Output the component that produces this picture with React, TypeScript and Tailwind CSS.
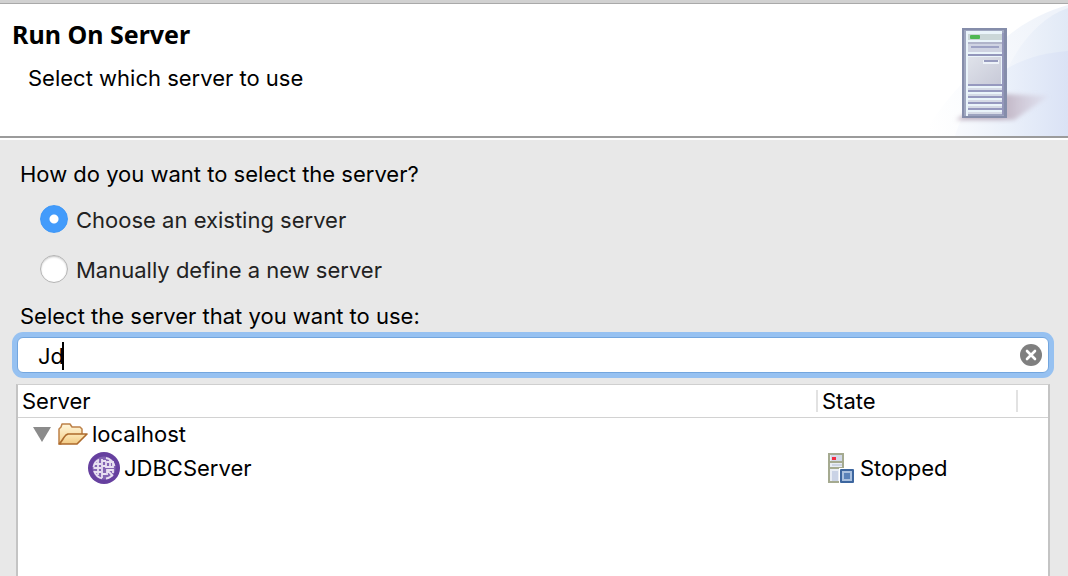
import { useState } from "react";

function BannerArt() {
  return (
    <svg className="h-[132px] w-[148px] shrink-0" viewBox="920 4 148 132" aria-hidden="true">
      <defs>
        <linearGradient id="sweep" gradientUnits="userSpaceOnUse" x1="925" x2="1068" y1="120" y2="80">
          <stop offset="0" stopColor="#ffffff" />
          <stop offset="0.5" stopColor="#f8fafd" />
          <stop offset="1" stopColor="#eff3fa" />
        </linearGradient>
        <linearGradient id="sweepInner" gradientUnits="userSpaceOnUse" x1="1000" x2="1068" y1="0" y2="0">
          <stop offset="0" stopColor="#f4f7fc" />
          <stop offset="1" stopColor="#e1e9f6" />
        </linearGradient>
        <linearGradient id="sweepLow" gradientUnits="userSpaceOnUse" x1="950" x2="1068" y1="0" y2="0">
          <stop offset="0" stopColor="#fafbfe" />
          <stop offset="0.5" stopColor="#eaf0fa" />
          <stop offset="1" stopColor="#dae2f5" />
        </linearGradient>
        <linearGradient id="shade" gradientUnits="userSpaceOnUse" x1="1000" x2="1050" y1="0" y2="0">
          <stop offset="0" stopColor="#b09fb1" stopOpacity="0.8" />
          <stop offset="1" stopColor="#cdbccb" stopOpacity="0.15" />
        </linearGradient>
        <linearGradient id="face" x1="0" x2="1" y1="0" y2="1">
          <stop offset="0" stopColor="#dfe2ea" />
          <stop offset="1" stopColor="#c8cad8" />
        </linearGradient>
        <filter id="soft" x="-20%" y="-30%" width="140%" height="160%">
          <feGaussianBlur stdDeviation="2" />
        </filter>
      </defs>
      <path d="M1068 5C1035 14 1009 32 990 53C961 85 939 106 923 136H1068Z" fill="url(#sweep)" />
      <path d="M1068 8C1042 17 1022 40 1009 66L1000 136H1068Z" fill="url(#sweepInner)" />
      <path d="M1068 51C1044 53 1025 58 1008 68C982 84 964 106 955 136H1068Z" fill="url(#sweepLow)" />
      <path d="M1004 94L1049 96L1014 120H956L962 116Z" fill="url(#shade)" filter="url(#soft)" />
      <rect x="962" y="28" width="45" height="90" fill="#858daa" />
      <rect x="964" y="30" width="40" height="86" fill="#a0a7c0" />
      <rect x="966" y="31" width="36" height="85" fill="#eaf4fa" />
      <rect x="1002" y="33" width="2" height="82" fill="#9396ba" />
      <rect x="968" y="34" width="34" height="6" fill="#cbd7d8" />
      <rect x="970" y="35" width="10" height="4" rx="1" fill="#50b854" />
      <rect x="968" y="44" width="34" height="8" fill="#cfd3e2" />
      <rect x="968" y="42" width="34" height="2" fill="#b0b4ca" />
      <rect x="971" y="46" width="28" height="2" fill="#9da2c4" />
      <rect x="968" y="54" width="34" height="2" fill="#9296bb" />
      <rect x="968" y="57" width="33" height="27" fill="url(#face)" />
      <rect x="983" y="60" width="16" height="4" fill="#edf2f8" />
      <rect x="984" y="60" width="14" height="2" fill="#979bbe" />
      <g fill="#9699bf">
        <rect x="968" y="84" width="34" height="2" />
        <rect x="968" y="90" width="34" height="2" />
        <rect x="968" y="96" width="34" height="2" />
        <rect x="968" y="102" width="34" height="2" />
        <rect x="968" y="108" width="34" height="2" />
      </g>
      <g fill="#d5dae6">
        <rect x="968" y="88" width="34" height="2" />
        <rect x="968" y="94" width="34" height="2" />
        <rect x="968" y="100" width="34" height="2" />
        <rect x="968" y="106" width="34" height="2" />
        <rect x="968" y="112" width="34" height="2" />
      </g>
      <rect x="968" y="114" width="34" height="2" fill="#9da3bf" />
    </svg>
  );
}

function FolderIcon() {
  return (
    <svg className="h-[22px] w-[31px] shrink-0" viewBox="0 0 31 22" aria-hidden="true">
      <defs>
        <linearGradient id="folderBack" x1="0" x2="0" y1="0" y2="1">
          <stop offset="0" stopColor="#fff6da" />
          <stop offset="1" stopColor="#f3ce88" />
        </linearGradient>
        <linearGradient id="folderFront" x1="0" x2="0" y1="0" y2="1">
          <stop offset="0" stopColor="#fde9b8" />
          <stop offset="1" stopColor="#f1c983" />
        </linearGradient>
      </defs>
      <path d="M2 20V6L4 4L5 1H13L15 4H23L25 6V12L9 19L3 21Z" fill="url(#folderBack)" stroke="#bd8148" strokeWidth="1.5" strokeLinejoin="round" />
      <path d="M2 21C4 20 6 15 9 12L11 11H30L21 20L20 21Z" fill="url(#folderFront)" stroke="#ad6b2d" strokeWidth="1.7" strokeLinejoin="round" />
    </svg>
  );
}

function JdbcIcon() {
  return (
    <svg className="size-8 shrink-0" viewBox="0 0 32 32" aria-hidden="true">
      <circle cx="16" cy="16" r="16" fill="#66409f" />
      <circle cx="16" cy="16" r="11.500" fill="#8465b3" />
      <g fill="none" stroke="#e8e0f1" strokeWidth="1.800">
        <path d="M11 7.500C8 9 6 12 5.500 15M26.500 14C25.500 10 22 6.500 18 6M6 19C7.500 23 10 25.500 14 26.500M18 26.500C21 26 23 25 24 23" />
        <path d="M7 12H13M5.500 16H13M7 20H13M10 8V23M14 7V26M14 9H18M14 14H18M14 22H18" />
        <path d="M18 9V15H25V10H19M22 8V15M19 18L25 24M19 23V18H25V21" />
      </g>
    </svg>
  );
}

function StoppedIcon() {
  return (
    <svg className="h-[31px] w-[28px] shrink-0" viewBox="0 0 28 31" aria-hidden="true">
      <rect x="0" y="0" width="16" height="30" fill="#a5aa90" />
      <rect x="2" y="2" width="12" height="26" fill="#e9edf4" />
      <rect x="3" y="2" width="11" height="6" fill="#d2d9e8" />
      <rect x="4" y="4" width="4" height="3" fill="#f22c42" />
      <rect x="2" y="8" width="12" height="2" fill="#a5aa90" />
      <rect x="4" y="11" width="10" height="2" fill="#ced5e4" />
      <rect x="2" y="14" width="12" height="2" fill="#a5aa90" />
      <rect x="4" y="18" width="6" height="10" fill="#cad3e6" />
      <rect x="11" y="15" width="16" height="16" fill="#fff" />
      <rect x="12" y="16" width="14" height="14" rx="1" fill="#3d669f" />
      <rect x="14" y="18" width="10" height="10" fill="#a9c0df" />
      <rect x="16" y="20" width="6" height="6" fill="#5a82b9" />
    </svg>
  );
}

const radioClass =
  "size-7 shrink-0 appearance-none rounded-full border border-[#b4b4b4] bg-white shadow-[inset_0_1px_2px_#c8c8c8] checked:border-[#3f97f6] checked:bg-[radial-gradient(circle,#ffffff_4px,#429bfb_5px)] checked:shadow-none";

export default function App() {
  const [mode, setMode] = useState("existing");
  const [filter, setFilter] = useState("Jd");

  return (
    <div className="flex h-screen flex-col overflow-hidden bg-[#e8e8e8] font-['Inter',sans-serif] text-[22px] leading-7 text-black">
      <div className="h-[3px] shrink-0 bg-[#d1d1d1]" />
      <header className="flex shrink-0 justify-between border-t border-b-2 border-t-[#a9a9a9] border-b-[#9b9b9b] bg-white">
        <div className="pt-[14px] pl-3">
          <h1 className="font-['Noto_Sans',sans-serif] text-[25px] leading-8 font-bold">Run On Server</h1>
          <p className="pt-[14px] pl-4">Select which server to use</p>
        </div>
        <BannerArt />
      </header>

      <main className="flex min-h-0 flex-1 flex-col border-t-2 border-white px-4 pt-5">
        <fieldset className="pl-1">
          <legend>How do you want to select the server?</legend>
          <div className="flex flex-col gap-5 pt-4 pl-5 text-[#222]">
            <label className="flex items-center gap-2">
              <input type="radio" name="mode" className={radioClass} checked={mode === "existing"} onChange={() => setMode("existing")} />
              <span className="pt-0.5">Choose an existing server</span>
            </label>
            <label className="flex items-center gap-2">
              <input type="radio" name="mode" className={radioClass} checked={mode === "new"} onChange={() => setMode("new")} />
              <span className="pt-0.5">Manually define a new server</span>
            </label>
          </div>
        </fieldset>

        <label htmlFor="filter" className="pt-[18px] pl-1">Select the server that you want to use:</label>
        <div className="relative mr-[3px] ml-px mt-[7px] flex h-9 shrink-0 items-center rounded-md border border-[#73a6de] bg-white pr-[5px] ring-5 ring-[#96c1f1]">
          <input
            id="filter"
            type="text"
            value={filter}
            onChange={(e) => setFilter(e.target.value)}
            className="min-w-0 flex-1 bg-transparent pt-0.5 pl-5 caret-transparent outline-none"
          />
          <span className="pointer-events-none absolute top-1 left-11 h-7 w-0.5 bg-black" />
          <button type="button" aria-label="Clear" onClick={() => setFilter("")} className="shrink-0">
            <svg className="size-6" viewBox="0 0 24 24" aria-hidden="true">
              <circle cx="12" cy="12" r="11" fill="#7f7f7f" />
              <path d="M8 8L16 16M16 8L8 16" stroke="#fff" strokeWidth="2.600" strokeLinecap="round" />
            </svg>
          </button>
        </div>

        <div className="mt-[11px] mr-0.5 min-h-0 flex-1 border-x-2 border-t border-x-[#c4c4c4] border-t-[#cfcfcf] bg-white">
          <table className="w-full table-fixed border-collapse">
            <thead>
              <tr className="h-8 border-b border-[#d2d2d2] text-left">
                <th className="p-0 font-normal">
                  <div className="flex h-[22px] items-center justify-between border-r-2 border-[#e2e2e2] pl-1">Server</div>
                </th>
                <th className="w-[200px] p-0 font-normal">
                  <div className="flex h-[22px] items-center border-r-2 border-[#e2e2e2] pl-1">State</div>
                </th>
                <th className="w-[30px] p-0" />
              </tr>
            </thead>
            <tbody>
              <tr className="h-[34px]">
                <td className="p-0">
                  <div className="flex items-center pl-[15px]">
                    <button type="button" aria-label="Collapse localhost" className="mr-[6px]">
                      <svg className="h-[15px] w-[18px]" viewBox="0 0 18 15" aria-hidden="true">
                        <path d="M0 0H18L9 15Z" fill="#8b8b8b" />
                      </svg>
                    </button>
                    <FolderIcon />
                    <span className="pl-1">localhost</span>
                  </div>
                </td>
                <td />
                <td />
              </tr>
              <tr className="h-[34px]">
                <td className="p-0">
                  <div className="flex items-center pl-[70px]">
                    <JdbcIcon />
                    <span className="pl-1">JDBCServer</span>
                  </div>
                </td>
                <td className="p-0">
                  <div className="flex items-center pl-[10px]">
                    <StoppedIcon />
                    <span className="pl-1">Stopped</span>
                  </div>
                </td>
                <td />
              </tr>
            </tbody>
          </table>
        </div>
      </main>
    </div>
  );
}
